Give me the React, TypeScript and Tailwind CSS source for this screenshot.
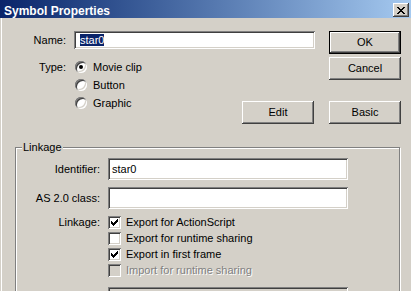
import React from "react";

const raised =
  "bg-[#d4d0c8] shadow-[inset_-1px_-1px_#404040,inset_1px_1px_#ffffff,inset_-2px_-2px_#808080,inset_2px_2px_#d4d0c8]";
const sunken =
  "shadow-[inset_1px_1px_#808080,inset_-1px_-1px_#ffffff,inset_2px_2px_#404040,inset_-2px_-2px_#d4d0c8]";

function Button({ label, primary }: { label: string; primary?: boolean }) {
  if (primary) {
    return (
      <div className="w-[72px] h-[23px] border border-black bg-[#d4d0c8] shadow-[inset_-1px_-1px_#404040,inset_1px_1px_#ffffff,inset_-2px_-2px_#808080] flex items-center justify-center">
        {label}
      </div>
    );
  }
  return <div className={`w-[72px] h-[23px] ${raised} flex items-center justify-center`}>{label}</div>;
}

function Radio({ label, checked }: { label: string; checked?: boolean }) {
  return (
    <div className="flex items-center h-[18px]">
      <div className={`w-[12px] h-[12px] rounded-full bg-white ${sunken} flex items-center justify-center`}>
        {checked && <div className="w-[4px] h-[4px] rounded-full bg-black" />}
      </div>
      <span className="ml-[6px]">{label}</span>
    </div>
  );
}

function CheckMark() {
  const px: [number, number][] = [
    [6, 0],
    [5, 1], [6, 1],
    [0, 2], [4, 2], [5, 2], [6, 2],
    [0, 3], [1, 3], [3, 3], [4, 3], [5, 3],
    [0, 4], [1, 4], [2, 4], [3, 4], [4, 4],
    [1, 5], [2, 5], [3, 5],
    [2, 6],
  ];
  return (
    <svg width="7" height="7" viewBox="0 0 7 7" shapeRendering="crispEdges">
      {px.map(([x, y], i) => (
        <rect key={i} x={x} y={y} width="1" height="1" fill="#000" />
      ))}
    </svg>
  );
}

function Check({ label, checked, disabled }: { label: string; checked?: boolean; disabled?: boolean }) {
  return (
    <div className="flex items-center h-[16px]">
      <div
        className={`w-[13px] h-[13px] ${disabled ? "bg-[#d4d0c8]" : "bg-white"} ${sunken} flex items-center justify-center`}
      >
        {checked && <CheckMark />}
      </div>
      <span
        className={`ml-[5px] ${disabled ? "text-[#808080] [text-shadow:1px_1px_0_#ffffff]" : ""}`}
      >
        {label}
      </span>
    </div>
  );
}

function CloseIcon() {
  return (
    <svg width="8" height="7" viewBox="0 0 8 7" shapeRendering="crispEdges">
      <path
        d="M0 0h2v1h-2zM6 0h2v1h-2zM1 1h2v1h-2zM5 1h2v1h-2zM2 2h4v1h-4zM3 3h2v1h-2zM2 4h4v1h-4zM1 5h2v1h-2zM5 5h2v1h-2zM0 6h2v1h-2zM6 6h2v1h-2z"
        fill="#000"
      />
    </svg>
  );
}

export default function App() {
  return (
    <div className="w-[411px] h-[291px] overflow-hidden bg-[#d4d0c8] font-['Liberation_Sans',Arial,sans-serif] text-[11px] text-black">
      {/* title bar */}
      <div className="h-[18px] flex items-start bg-gradient-to-r from-[#0a246a] to-[#a6caf0] pl-[4px] pr-[2px]">
        <span className="mt-[4px] leading-[14px] flex-1 font-bold text-[12px] text-white">Symbol Properties</span>
        <div className={`mt-[3px] w-[16px] h-[14px] ${raised} flex items-center justify-center`}>
          <CloseIcon />
        </div>
      </div>

      <div className="shadow-[inset_1px_0_#d4d0c8,inset_2px_0_#ffffff] h-[273px]">
        {/* top section */}
        <div className="flex pt-[13px]">
          <div className="w-[315px] flex flex-col">
            <div className="flex items-center h-[18px]">
              <span className="w-[66px] text-right">Name:</span>
              <div className={`ml-[8px] w-[241px] h-[18px] bg-white ${sunken} flex items-center pl-[6px]`}>
                <span className="bg-[#0a246a] text-white leading-[12px]">star0</span>
              </div>
            </div>
            <div className="flex mt-[9px]">
              <div className="flex">
                <div className="w-[66px] h-[18px] flex items-center justify-end">Type:</div>
                <div className="ml-[9px] flex flex-col">
                  <Radio label="Movie clip" checked />
                  <Radio label="Button" />
                  <Radio label="Graphic" />
                </div>
              </div>
              <div className="ml-auto mr-[1px] mt-[43px]">
                <Button label="Edit" />
              </div>
            </div>
          </div>
          <div className="ml-[14px] flex flex-col">
            <Button label="OK" primary />
            <div className="mt-[3px]">
              <Button label="Cancel" />
            </div>
            <div className="mt-[21px]">
              <Button label="Basic" />
            </div>
          </div>
        </div>

        {/* linkage group */}
        <div className="relative mt-[23px] ml-[15px] w-[385px] h-[200px] border border-[#808080] shadow-[inset_1px_1px_#ffffff,1px_1px_#ffffff]">
          <span className="absolute top-[-7px] left-[6px] px-[1px] leading-[13px] bg-[#d4d0c8]">Linkage</span>
          <div className="pt-[10px] flex flex-col">
            <div className="flex items-center">
              <span className="w-[84px] text-right">Identifier:</span>
              <div className={`ml-[8px] w-[240px] h-[22px] bg-white ${sunken} flex items-center pl-[4px]`}>star0</div>
            </div>
            <div className="flex items-center mt-[7px]">
              <span className="w-[84px] text-right">AS 2.0 class:</span>
              <div className={`ml-[8px] w-[240px] h-[22px] bg-white ${sunken}`} />
            </div>
            <div className="flex mt-[5px]">
              <div className="w-[84px] h-[16px] flex items-center justify-end">Linkage:</div>
              <div className="ml-[8px] flex flex-col">
                <Check label="Export for ActionScript" checked />
                <Check label="Export for runtime sharing" />
                <Check label="Export in first frame" checked />
                <Check label="Import for runtime sharing" disabled />
              </div>
            </div>
            <div className="flex mt-[9px]">
              <div className={`ml-[92px] w-[240px] h-[22px] bg-[#d4d0c8] ${sunken}`} />
            </div>
          </div>
        </div>
      </div>
    </div>
  );
}
